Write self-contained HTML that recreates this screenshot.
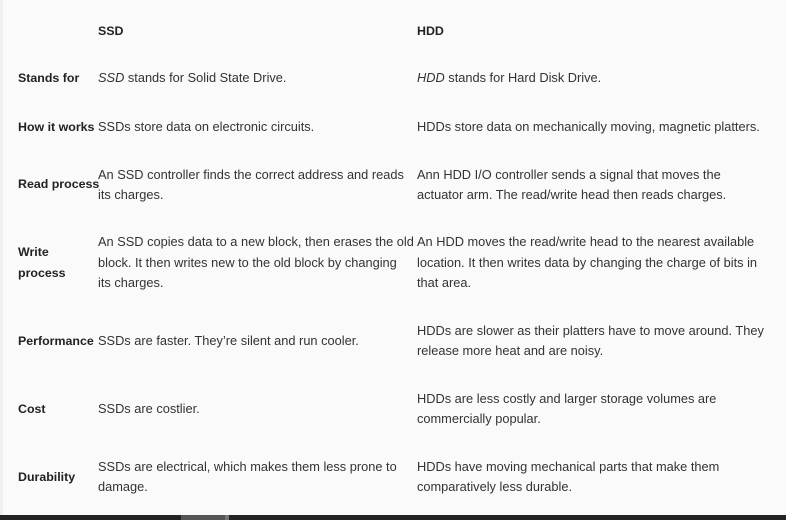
<!DOCTYPE html>
<html><head><meta charset="utf-8"><style>
html,body{margin:0;padding:0}
body{width:786px;height:520px;background:#fafafa;position:relative;overflow:hidden;font-family:"Liberation Sans",sans-serif;font-size:12.8px;color:#333}
.t{position:absolute;white-space:nowrap;line-height:20px}
.b{font-weight:bold;color:#222;font-size:12.4px}
.edge{position:absolute;left:0;top:0;width:3px;height:515px;background:#f0f0f0}
.bar{position:absolute;left:0;top:515px;width:786px;height:5px;background:#232323}
.bk{position:absolute;left:181px;top:515px;width:44px;height:5px;background:#555}
.bk2{position:absolute;left:225px;top:515px;width:4px;height:5px;background:#777}
</style></head><body>
<div class="edge"></div>
<div class="t b" style="left:98px;top:21px">SSD</div>
<div class="t b" style="left:417px;top:21px">HDD</div>

<div class="t b" style="left:18px;top:68px">Stands for</div>
<div class="t" style="left:98px;top:68px"><i>SSD</i> stands for Solid State Drive.</div>
<div class="t" style="left:417px;top:68px"><i>HDD</i> stands for Hard Disk Drive.</div>

<div class="t b" style="left:18px;top:117px">How it works</div>
<div class="t" style="left:98px;top:117px">SSDs store data on electronic circuits.</div>
<div class="t" style="left:417px;top:117px">HDDs store data on mechanically moving, magnetic platters.</div>

<div class="t b" style="left:18px;top:174px">Read process</div>
<div class="t" style="left:98px;top:165px">An SSD controller finds the correct address and reads<br>its charges.</div>
<div class="t" style="left:417px;top:165px">Ann HDD I/O controller sends a signal that moves the<br>actuator arm. The read/write head then reads charges.</div>

<div class="t b" style="left:18px;top:242px;line-height:21px">Write<br>process</div>
<div class="t" style="left:98px;top:232px;line-height:20.5px">An SSD copies data to a new block, then erases the old<br>block. It then writes new to the old block by changing<br>its charges.</div>
<div class="t" style="left:417px;top:232px;line-height:20.5px">An HDD moves the read/write head to the nearest available<br>location. It then writes data by changing the charge of bits in<br>that area.</div>

<div class="t b" style="left:18px;top:331px">Performance</div>
<div class="t" style="left:98px;top:331px">SSDs are faster. They’re silent and run cooler.</div>
<div class="t" style="left:417px;top:321px">HDDs are slower as their platters have to move around. They<br>release more heat and are noisy.</div>

<div class="t b" style="left:18px;top:399px">Cost</div>
<div class="t" style="left:98px;top:399px">SSDs are costlier.</div>
<div class="t" style="left:417px;top:389px">HDDs are less costly and larger storage volumes are<br>commercially popular.</div>

<div class="t b" style="left:18px;top:467px">Durability</div>
<div class="t" style="left:98px;top:457px">SSDs are electrical, which makes them less prone to<br>damage.</div>
<div class="t" style="left:417px;top:457px">HDDs have moving mechanical parts that make them<br>comparatively less durable.</div>

<div class="bar"></div><div class="bk"></div><div class="bk2"></div>
</body></html>
